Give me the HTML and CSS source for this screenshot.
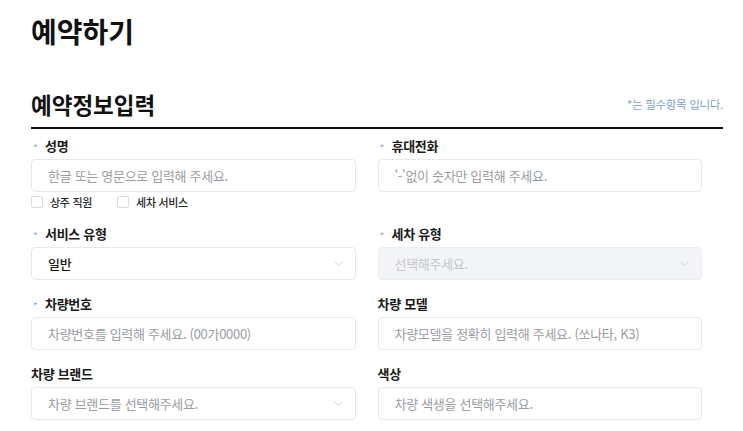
FILE: index.html
```html
<!DOCTYPE html>
<html lang="ko">
<head>
<meta charset="utf-8">
<title>예약하기</title>
<link rel="stylesheet" href="styles.css">
</head>
<body>
<main class="page">
  <h1 class="title">예약하기</h1>
  <div class="section-head">
    <h2 class="section-title">예약정보입력</h2>
    <span class="notice">*는 필수항목 입니다.</span>
  </div>
  <div class="form-grid">
    <div class="field">
      <label class="label"><span class="req">*</span>성명</label>
      <div class="input"><span class="ph">한글 또는 영문으로 입력해 주세요.</span></div>
      <div class="checks">
        <span class="check"><span class="box"></span>상주 직원</span>
        <span class="check"><span class="box"></span>세차 서비스</span>
      </div>
    </div>
    <div class="field">
      <label class="label"><span class="req">*</span>휴대전화</label>
      <div class="input"><span class="ph">'-'없이 숫자만 입력해 주세요.</span></div>
    </div>
    <div class="field">
      <label class="label"><span class="req">*</span>서비스 유형</label>
      <div class="input select"><span class="val">일반</span><svg class="chev" width="9" height="5" viewBox="0 0 9 5"><path d="M0.5 0.5l4 4 4-4" fill="none" stroke="#cfd2d7" stroke-width="1"/></svg></div>
    </div>
    <div class="field">
      <label class="label"><span class="req">*</span>세차 유형</label>
      <div class="input select disabled"><span class="ph">선택해주세요.</span><svg class="chev" width="9" height="5" viewBox="0 0 9 5"><path d="M0.5 0.5l4 4 4-4" fill="none" stroke="#cfd2d7" stroke-width="1"/></svg></div>
    </div>
    <div class="field">
      <label class="label"><span class="req">*</span>차량번호</label>
      <div class="input"><span class="ph">차량번호를 입력해 주세요. (00가0000)</span></div>
    </div>
    <div class="field">
      <label class="label">차량 모델</label>
      <div class="input"><span class="ph">차량모델을 정확히 입력해 주세요. (쏘나타, K3)</span></div>
    </div>
    <div class="field">
      <label class="label">차량 브랜드</label>
      <div class="input select"><span class="ph">차량 브랜드를 선택해주세요.</span><svg class="chev" width="9" height="5" viewBox="0 0 9 5"><path d="M0.5 0.5l4 4 4-4" fill="none" stroke="#cfd2d7" stroke-width="1"/></svg></div>
    </div>
    <div class="field">
      <label class="label">색상</label>
      <div class="input"><span class="ph">차량 색생을 선택해주세요.</span></div>
    </div>
  </div>
</main>
</body>
</html>
```
FILE: styles.css
```css
* { box-sizing: border-box; margin: 0; padding: 0; }
body {
  background: #fff;
  font-family: "Noto Sans CJK KR", "Noto Sans", sans-serif;
  color: #111;
}
.page {
  padding: 17px 20px 0 31px;
}
.title {
  font-size: 28px;
  line-height: 28px;
  font-weight: 700;
}
.section-head {
  margin-top: 46px;
  display: flex;
  justify-content: space-between;
  align-items: center;
  border-bottom: 2px solid #111;
  padding-bottom: 10px;
}
.section-title {
  font-size: 22.5px;
  line-height: 26px;
  font-weight: 700;
}
.notice {
  font-size: 11.5px;
  color: #7ea1d3;
  letter-spacing: -0.3px;
}
.form-grid {
  width: 671px;
  margin-top: 7px;
  display: grid;
  grid-template-columns: 1fr 1fr;
  column-gap: 22px;
  row-gap: 14px;
}
.field {
  display: flex;
  flex-direction: column;
}
.label {
  font-size: 13px;
  line-height: 20px;
  font-weight: 700;
  color: #1a1a1a;
  letter-spacing: -0.3px;
  display: flex;
  align-items: center;
}
.req {
  color: #8aa8d6;
  font-size: 10px;
  font-weight: 400;
  width: 14px;
  padding-left: 2px;
  transform: translateY(2px);
}
.input {
  margin-top: 3px;
  height: 33px;
  border: 1px solid #e6e8eb;
  border-radius: 4px;
  display: flex;
  align-items: center;
  justify-content: space-between;
  padding: 0 12px 0 16px;
  font-size: 13px;
  letter-spacing: -0.3px;
}
.ph { color: #9a9da3; }
.val { color: #1a1a1a; font-weight: 500; }
.disabled { background: #f3f4f7; border-color: #eceef1; }
.disabled .ph { color: #c5c8cd; }
.chev { flex: none; }
.checks {
  margin-top: 2px;
  height: 16px;
  display: flex;
  align-items: center;
  gap: 25px;
  font-size: 11px;
  font-weight: 500;
  color: #2a2a2a;
  letter-spacing: -0.3px;
}
.check {
  display: flex;
  align-items: center;
  gap: 7px;
}
.box {
  width: 12px;
  height: 12px;
  border: 1px solid #d9dce0;
  border-radius: 2px;
  background: #fff;
}
```
